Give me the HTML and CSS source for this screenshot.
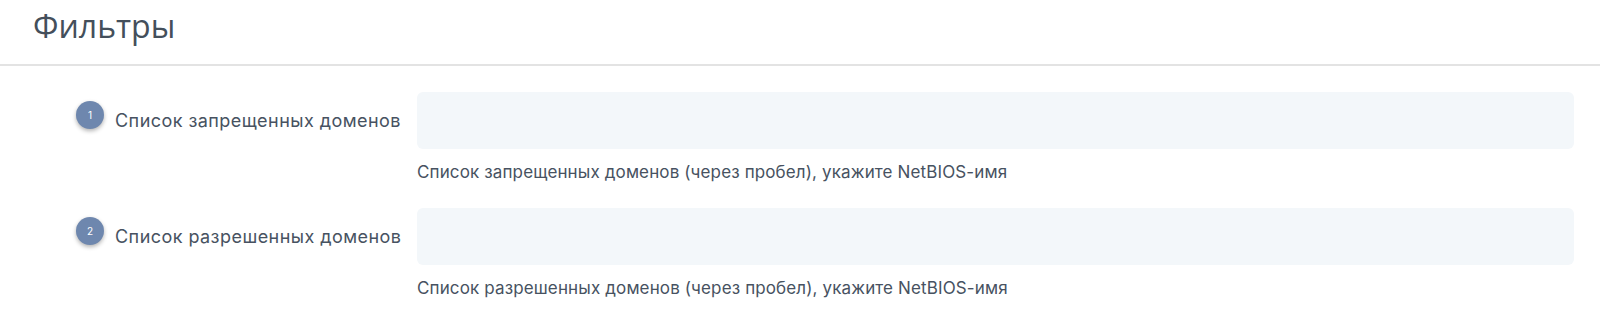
FILE: index.html
```html
<!DOCTYPE html>
<html lang="ru">
<head>
    <meta charset="UTF-8">
    <title>Фильтры</title>
    <link rel="stylesheet" href="styles.css">
</head>
<body>
  <header class="header">
    <h1>Фильтры</h1>
  </header>

  <div class="form">
    <div class="form-row">
      <div class="form-label">
        <span class="badge">1</span>
        <label for="deny">Список запрещенных доменов</label>
      </div>
      <div class="form-field">
        <input type="text" id="deny" class="text-input">
        <p class="hint">Список запрещенных доменов (через пробел), укажите NetBIOS-имя</p>
      </div>
    </div>

    <div class="form-row">
      <div class="form-label">
        <span class="badge">2</span>
        <label for="allow">Список разрешенных доменов</label>
      </div>
      <div class="form-field">
        <input type="text" id="allow" class="text-input">
        <p class="hint">Список разрешенных доменов (через пробел), укажите NetBIOS-имя</p>
      </div>
    </div>
  </div>
</body>
</html>
```

FILE: styles.css
```css
body {
  margin: 0;
  padding: 0;
  background-color: #fff;
  color: #475261;
  font-family: Inter, "Noto Sans", sans-serif;
}

.header {
  padding: 2px 33px 0;
  height: 66px;
  border-bottom: 2px solid #e3e3e3;
  box-sizing: border-box;
}

.header h1 {
  margin: 0;
  font-family: "Open Sans", sans-serif;
  font-weight: 400;
  font-size: 32px;
  line-height: 48px;
  color: #444f5b;
}

.form {
  padding: 26px 26px 0 76px;
}

.form-row {
  display: flex;
  margin-bottom: 25px;
}

.form-label {
  display: flex;
  align-items: center;
  width: 341px;
  height: 57px;
}

.badge {
  display: flex;
  align-items: center;
  justify-content: center;
  flex-shrink: 0;
  width: 28px;
  height: 28px;
  border-radius: 50%;
  background-color: #6e87ae;
  color: #fff;
  font-size: 10px;
  box-shadow: 0 2px 4px rgba(0, 0, 0, 0.3);
  margin-right: 11px;
  margin-top: -11px;
}

.form-label label {
  font-size: 18px;
  letter-spacing: 0.45px;
  white-space: nowrap;
  color: #475261;
}

.form-field {
  flex-grow: 1;
}

.text-input {
  display: block;
  width: 100%;
  height: 57px;
  box-sizing: border-box;
  border: none;
  border-radius: 6px;
  background-color: #f3f7fa;
  outline: none;
}

.hint {
  margin: 12px 0 0;
  font-size: 17px;
  letter-spacing: 0.13px;
  line-height: 22px;
  color: #475261;
}
```
